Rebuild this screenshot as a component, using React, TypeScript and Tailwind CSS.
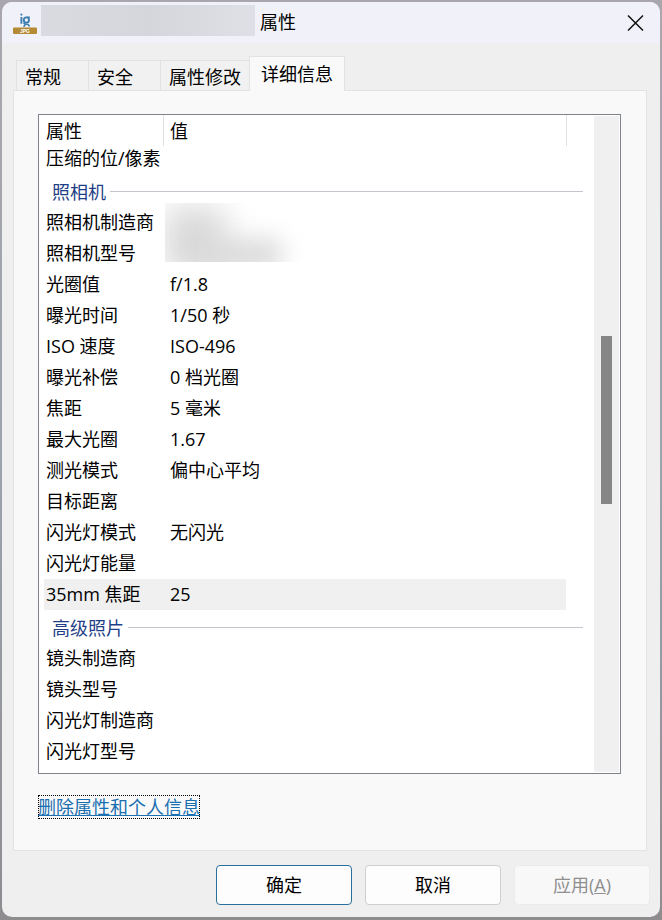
import clsx from "clsx";

type Row = {
  name: string;
  value?: string;
  kind?: "category" | "clipped" | "redacted" | "hidden";
  selected?: boolean;
};

const tabs = ["常规", "安全", "属性修改", "详细信息"];

const rows: Row[] = [
  { name: "压缩的位/像素", kind: "clipped" },
  { name: "照相机", kind: "category" },
  { name: "照相机制造商", kind: "redacted" },
  { name: "照相机型号", kind: "hidden" },
  { name: "光圈值", value: "f/1.8" },
  { name: "曝光时间", value: "1/50 秒" },
  { name: "ISO 速度", value: "ISO-496" },
  { name: "曝光补偿", value: "0 档光圈" },
  { name: "焦距", value: "5 毫米" },
  { name: "最大光圈", value: "1.67" },
  { name: "测光模式", value: "偏中心平均" },
  { name: "目标距离" },
  { name: "闪光灯模式", value: "无闪光" },
  { name: "闪光灯能量" },
  { name: "35mm 焦距", value: "25", selected: true },
  { name: "高级照片", kind: "category" },
  { name: "镜头制造商" },
  { name: "镜头型号" },
  { name: "闪光灯制造商" },
  { name: "闪光灯型号" },
];

const FileIcon = () => (
  <svg width="24" height="24" viewBox="0 0 24 24" aria-hidden="true">
    <g fill="none" stroke="#3f7fb0" strokeWidth="1.9">
      <path d="M8.4 5v6.8" />
      <circle cx="13.4" cy="8" r="2.6" />
      <path d="M13.5 5.3h3.4" strokeWidth="1.4" />
      <path d="M11.2 10.6c-.6 1 .3 1.5 1.6 1.5 2 .1 3.2.7 3.6 2.4" strokeWidth="1.5" />
      <path d="M12.6 12.2l-2 2.6" strokeWidth="1.5" />
    </g>
    <circle cx="8.4" cy="2.6" r="1.1" fill="#3f7fb0" />
    <rect y="15.5" width="24" height="6.5" rx="1" fill="#b48a34" />
    <text
      x="12"
      y="20.8"
      textAnchor="middle"
      fontSize="5"
      fontWeight="700"
      fill="#fff"
      fontFamily="Liberation Sans, sans-serif"
    >
      JPG
    </text>
  </svg>
);

const TitleBar = () => (
  <header className="flex h-[41px] items-start bg-[#f1f2f9] pr-4 pl-[11px]">
    <div className="pt-[10px]">
      <FileIcon />
    </div>
    <div className="mt-[3px] ml-1 h-[31px] w-[214px] bg-linear-to-r from-[#dadbe0] via-[#d5d6dc] to-[#dfe0e6]" />
    <h1 className="ml-[5px] h-[41px] flex-1 text-lg leading-[41px]">属性</h1>
    <button type="button" aria-label="关闭" className="mt-3">
      <svg width="18" height="18" viewBox="0 0 18 18" aria-hidden="true">
        <path
          d="M2 1.5l15 15M17 1.5l-15 15"
          stroke="#111"
          strokeWidth="1.5"
          fill="none"
        />
      </svg>
    </button>
  </header>
);

const TabList = () => (
  <div role="tablist" className="flex items-end pl-[14px]">
    {tabs.map((tab) => {
      const active = tab === "详细信息";
      return (
        <button
          key={tab}
          type="button"
          role="tab"
          aria-selected={active}
          className={clsx(
            "border-t border-l border-[#e2e2e2] text-left",
            active
              ? "relative -mb-px h-[35px] border-r bg-[#f9f9f9] px-[11px]"
              : "h-[30px] min-w-[72px] bg-[#f1f1f1] px-2 pt-[3px]",
          )}
        >
          {tab}
        </button>
      );
    })}
  </div>
);

const CategoryRow = ({ name }: { name: string }) => (
  <tr className="h-[33px]">
    <th colSpan={3} scope="colgroup" className="p-0 pt-[2px] pl-2 font-normal">
      <div className="flex items-center gap-1 text-[#1f3f87]">
        {name}
        <span className="h-px flex-1 bg-[#c2c6cc]" />
      </div>
    </th>
  </tr>
);

const PropertyRow = ({ row }: { row: Row }) => {
  if (row.kind === "category") return <CategoryRow name={row.name} />;

  const clipped = row.kind === "clipped";

  return (
    <tr className={clsx(clipped ? "h-[28px] align-top" : "h-[31px]")}>
      <th
        scope="row"
        className={clsx(
          "p-0 pl-[2px] font-normal whitespace-nowrap",
          !clipped && "pb-[2px]",
          row.selected && "bg-[#f0f0f0]",
        )}
      >
        {row.name}
      </th>
      {row.kind === "redacted" && (
        <td rowSpan={2} className="p-0 pl-[2px]">
          <div className="relative -top-1.5 h-[59px] w-[140px] overflow-hidden">
            <div className="absolute top-1 left-0 h-[68px] w-[60px] bg-[#d8d8d8] blur-lg" />
            <div className="absolute top-9 left-8 h-8 w-[84px] bg-[#dadada] blur-md" />
          </div>
        </td>
      )}
      {row.kind !== "redacted" && row.kind !== "hidden" && (
        <td
          className={clsx("p-0 pb-[2px] pl-[7px]", row.selected && "bg-[#f0f0f0]")}
        >
          {row.value}
        </td>
      )}
      <td className="p-0" />
    </tr>
  );
};

const PropertyList = () => (
  <div className="flex border border-[#7e828b] bg-white">
    <div className="flex-1 pr-[11px] pb-[6px] pl-[5px]">
      <table className="w-full table-fixed border-separate border-spacing-0 text-left">
        <colgroup>
          <col className="w-[119px]" />
          <col />
          <col className="w-[17px]" />
        </colgroup>
        <thead>
          <tr className="h-[31px]">
            <th className="p-0 pl-[2px] font-normal">属性</th>
            <th className="border-l border-[#e0e0e0] p-0 pl-[6px] font-normal">
              值
            </th>
            <td className="border-l border-[#e0e0e0] p-0" />
          </tr>
        </thead>
        <tbody>
          {rows.map((row) => (
            <PropertyRow key={row.name} row={row} />
          ))}
        </tbody>
      </table>
    </div>
    {/* Scrollbar */}
    <div className="my-px mr-px w-[25px] bg-[#f0f0f0] pt-[220px] pl-[7px]">
      <div className="h-[168px] w-[11px] bg-[#868686]" />
    </div>
  </div>
);

const Footer = () => (
  <footer className="flex justify-end gap-[13px] pt-[14px] pr-[10px] pb-3">
    <button
      type="button"
      className="h-10 w-[136px] rounded border border-[#2a6f9e] bg-[#fdfdfd]"
    >
      确定
    </button>
    <button
      type="button"
      className="h-10 w-[136px] rounded border border-[#cfcfcf] bg-[#fdfdfd]"
    >
      取消
    </button>
    <button
      type="button"
      disabled
      className="h-10 w-[136px] rounded border border-[#ebebeb] bg-[#f8f8f8] text-[#8f8f8f]"
    >
      应用(<span className="underline">A</span>)
    </button>
  </footer>
);

export default function App() {
  return (
    <div className="min-h-screen bg-linear-to-b from-[#aaa6ad] via-[#9ba3ad] to-[#8f8c90] px-[2px] pt-[2px] pb-[3px] font-['Open_Sans','Noto_Sans_CJK_SC',sans-serif] text-lg leading-6 text-black">
      <main className="overflow-hidden rounded-[10px] bg-[#efefef]">
        <TitleBar />
        <div className="pt-[13px]">
          <TabList />
          <section
            role="tabpanel"
            className="mr-[13px] ml-[11px] border border-[#e3e3e3] bg-[#f9f9f9] pt-[23px] pr-[25px] pb-[31px] pl-6"
          >
            <PropertyList />
            <a
              href="#remove"
              className="mt-[21px] block w-fit text-[#1a6fb0] underline outline-1 -outline-offset-1 outline-black outline-dotted"
            >
              删除属性和个人信息
            </a>
          </section>
        </div>
        <Footer />
      </main>
    </div>
  );
}
